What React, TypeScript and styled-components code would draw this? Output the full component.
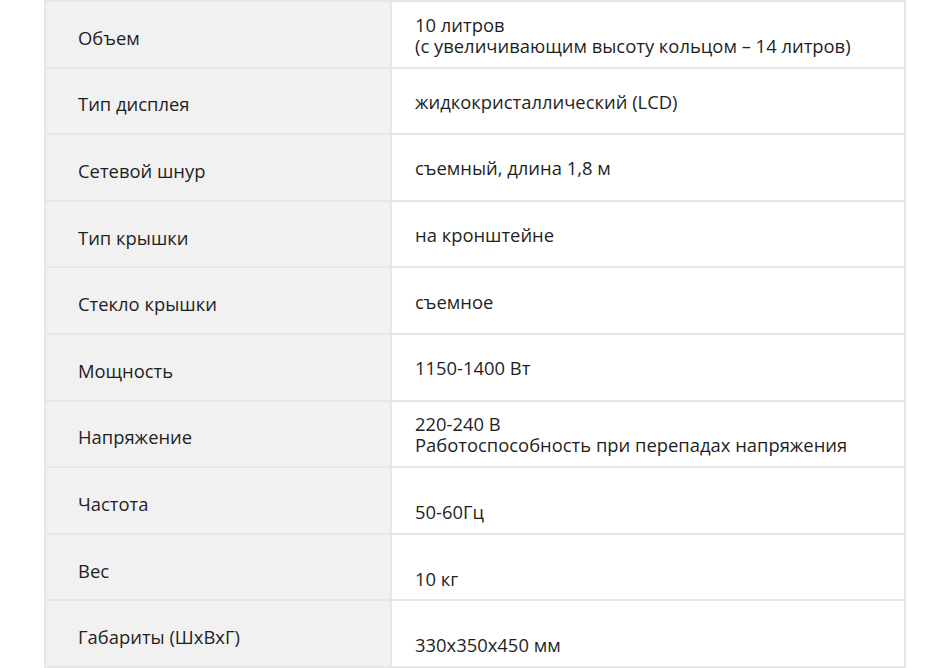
import styled, { createGlobalStyle } from "styled-components";

const GlobalStyle = createGlobalStyle`
  html, body {
    margin: 0;
    padding: 0;
    background: #ffffff;
  }
  body {
    font-family: "Open Sans", "Liberation Sans", sans-serif;
    color: #1f1f1f;
  }
`;

type Spec = { label: string; value: string[]; low?: boolean };

const specs: Spec[] = [
  { label: "Объем", value: ["10 литров", "(с увеличивающим высоту кольцом – 14 литров)"] },
  { label: "Тип дисплея", value: ["жидкокристаллический (LCD)"] },
  { label: "Сетевой шнур", value: ["съемный, длина 1,8 м"] },
  { label: "Тип крышки", value: ["на кронштейне"] },
  { label: "Стекло крышки", value: ["съемное"] },
  { label: "Мощность", value: ["1150-1400 Вт"] },
  { label: "Напряжение", value: ["220-240 В", "Работоспособность при перепадах напряжения"] },
  // в оригинале значение опущено на строку вниз
  { label: "Частота", value: ["50-60Гц"], low: true },
  { label: "Вес", value: ["10 кг"], low: true },
  { label: "Габариты (ШхВхГ)", value: ["330x350x450 мм"], low: true },
];

export default function App() {
  return (
    <>
      <GlobalStyle />
      <Page>
        <Table>
          {specs.map((s) => (
            <Row key={s.label}>
              <LabelCell>{s.label}</LabelCell>
              <ValueCell>
                {s.low && <Line>&nbsp;</Line>}
                {s.value.map((v) => (
                  <Line key={v}>{v}</Line>
                ))}
              </ValueCell>
            </Row>
          ))}
        </Table>
      </Page>
    </>
  );
}

const Page = styled.div`
  width: 950px;
  height: 668px;
  padding-left: 44px;
  box-sizing: border-box;
  overflow: hidden;
`;

const Table = styled.div`
  width: 862px;
  height: 668px;
  box-sizing: border-box;
  background: #e6e6e6;
  padding: 2px;
  display: grid;
  grid-template-rows: repeat(10, 1fr);
  gap: 2px;
`;

const Row = styled.div`
  display: grid;
  grid-template-columns: 344px 1fr;
  gap: 2px;
`;

const LabelCell = styled.div`
  background: #f1f1f1;
  display: flex;
  align-items: center;
  padding-left: 32px;
  padding-top: 6px;
  font-size: 18.4px;
  line-height: 21px;
`;

const ValueCell = styled.div`
  background: #ffffff;
  display: flex;
  flex-direction: column;
  justify-content: center;
  padding-left: 23px;
  padding-top: 1px;
  font-size: 18.4px;
  line-height: 21px;
`;

const Line = styled.div`
  white-space: nowrap;
`;
